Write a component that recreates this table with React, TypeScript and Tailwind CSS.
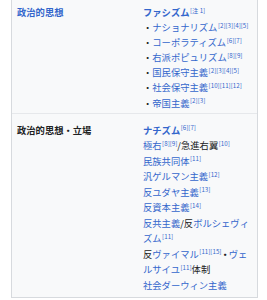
import React from "react";

const L = ({ children, b }: { children: React.ReactNode; b?: boolean }) => (
  <span className={"text-[#3366cc]" + (b ? " font-bold" : "")}>{children}</span>
);
const S = ({ children }: { children: React.ReactNode }) => (
  <span className="text-[6.2px] text-[#3366cc] leading-none relative top-[-3.5px] ml-[0.5px]">
    {children}
  </span>
);

export default function App() {
  return (
    <div
      className="w-[267px] h-[300px] bg-white overflow-hidden"
      style={{ fontFamily: '"Noto Sans CJK JP", "Noto Sans", sans-serif' }}
    >
      <div className="ml-[11px] w-[247px] border-x border-b border-[#d7dade] bg-[#f8f9fa] text-[9.3px] text-[#202122]">
        <div className="grid grid-cols-[126px_1fr] pl-[5px] pt-[5px] pb-[2px] leading-[15.1px]">
          <div className="font-bold text-[#3366cc]">政治的思想</div>
          <div className="flex flex-col">
            <div>
              <L b>ファシズム</L>
              <S>[注 1]</S>
            </div>
            <div>・<L>ナショナリズム</L><S>[2][3][4][5]</S></div>
            <div>・<L>コーポラティズム</L><S>[6][7]</S></div>
            <div>・<L>右派ポピュリズム</L><S>[8][9]</S></div>
            <div>・<L>国民保守主義</L><S>[2][3][4][5]</S></div>
            <div>・<L>社会保守主義</L><S>[10][11][12]</S></div>
            <div>・<L>帝国主義</L><S>[2][3]</S></div>
          </div>
        </div>
        <div className="border-t border-[#e6e8eb] grid grid-cols-[126px_1fr] pl-[5px] pt-[9px] pb-[4px] leading-[15.5px]">
          <div className="font-bold">政治的思想・立場</div>
          <div className="flex flex-col pr-[4px]">
            <div><L b>ナチズム</L><S>[6][7]</S></div>
            <div><L>極右</L><S>[8][9]</S>/急進右翼<S>[10]</S></div>
            <div><L>民族共同体</L><S>[11]</S></div>
            <div><L>汎ゲルマン主義</L><S>[12]</S></div>
            <div><L>反ユダヤ主義</L><S>[13]</S></div>
            <div><L>反資本主義</L><S>[14]</S></div>
            <div><L>反共主義</L>/反<L>ボルシェヴィズム</L><S>[11]</S></div>
            <div>
              <span className="whitespace-nowrap">
                反<L>ヴァイマル</L><S>[11][15]</S>
                <span className="font-bold mx-[-1px]">・</span>
                <L>ヴェ</L>
              </span>
              <br />
              <L>ルサイユ</L><S>[11]</S>体制
            </div>
            <div><L>社会ダーウィン主義</L></div>
          </div>
        </div>
      </div>
    </div>
  );
}
